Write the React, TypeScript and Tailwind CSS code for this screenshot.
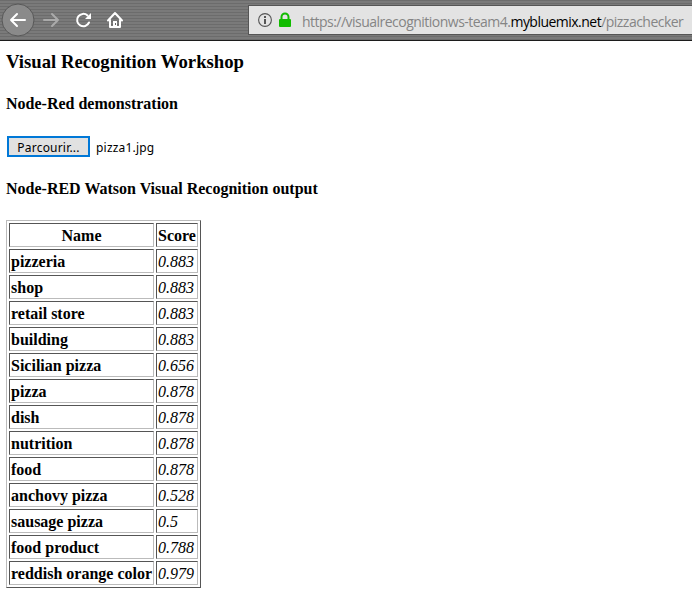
import React from "react";

const rows: [string, string][] = [
  ["pizzeria", "0.883"],
  ["shop", "0.883"],
  ["retail store", "0.883"],
  ["building", "0.883"],
  ["Sicilian pizza", "0.656"],
  ["pizza", "0.878"],
  ["dish", "0.878"],
  ["nutrition", "0.878"],
  ["food", "0.878"],
  ["anchovy pizza", "0.528"],
  ["sausage pizza", "0.5"],
  ["food product", "0.788"],
  ["reddish orange color", "0.979"],
];

const cell =
  "h-6 border border-t-[#555] border-l-[#555] border-r-[#bbb] border-b-[#bbb] px-px pt-[2px] pb-0 leading-[20px] whitespace-nowrap";

function Toolbar() {
  return (
    <header className="flex h-[41px] items-start border-b border-[#1c1c1c] bg-[repeating-linear-gradient(to_bottom,#6c6c6c_0px,#6c6c6c_1px,#7a7a7a_1px,#7a7a7a_3px)]">
      <svg width="248" height="40" viewBox="0 0 248 40" fill="none" className="shrink-0">
        <circle cx="18" cy="20" r="16" fill="#8a8a8a" stroke="#585858" />
        <g stroke="#fff" strokeWidth="2" strokeLinecap="round" strokeLinejoin="round">
          <path d="M25 20H11M17 14l-6 6 6 6" />
          <path stroke="#aaa" d="M44 20h14M52 14l6 6-6 6" />
          <path d="M89 22.5a6.2 6.2 0 1 1-1.5-7" />
          <path d="M108 20.5l7-7.5 7 7.5M110 20v7h10v-7" />
        </g>
        <path d="M91 13v6h-6z" fill="#fff" />
        <path d="M113 21h4v6h-4z" fill="#fff" />
        <path d="M115 23h1v2h-1z" fill="#666" />
      </svg>
      <div className="mt-[5px] flex h-[30px] flex-1 items-center border border-r-0 border-[#555] bg-[#e3e3e3] pl-[9px] font-['Open_Sans','Noto_Sans',sans-serif] text-[14px] tracking-[-0.52px] text-[#858585]">
        <svg width="44" height="28" viewBox="0 0 44 28" fill="none" className="shrink-0">
          <circle cx="7" cy="14" r="6.4" stroke="#555" strokeWidth="1.1" />
          <path d="M6 10h2v2H6zM6 13h2v5H6z" fill="#555" />
          <path d="M23.5 14v-3a3.5 3.5 0 0 1 7 0v3" stroke="#12bc00" strokeWidth="2" />
          <rect x="21" y="13" width="12" height="8" rx="1" fill="#12bc00" />
        </svg>
        <span className="pt-[2px] whitespace-nowrap">
          https://visualrecognitionws-team4.<span className="text-black">mybluemix.net</span>/pizzachecker
        </span>
      </div>
    </header>
  );
}

export default function App() {
  return (
    <div className="h-[603px] w-[692px] overflow-hidden bg-white font-['Liberation_Serif',serif] text-black">
      <Toolbar />
      <main className="pl-[6px]">
        <h1 className="mt-[9px] h-[24px] text-[18.72px] leading-[24px] font-bold">Visual Recognition Workshop</h1>
        <h2 className="mt-[20px] h-5 text-[16px] leading-5 font-bold">Node-Red demonstration</h2>
        <div className="mt-[22px] ml-px flex h-[21px] items-center font-['Noto_Sans',sans-serif] text-[12px] tracking-[0.2px]">
          <button className="flex h-[21px] w-[83px] items-center justify-center border-2 border-[#0078d7] bg-[#e1e1e1] pt-[2px]">Parcourir...</button>
          <span className="ml-[6px] pt-[2px]">pizza1.jpg</span>
        </div>
        <h2 className="mt-[22px] h-5 text-[16px] leading-5 font-bold">Node-RED Watson Visual Recognition output</h2>
        <table className="mt-[21px] w-[195px] table-fixed border-separate border-spacing-[2px] border border-t-[#bbb] border-l-[#bbb] border-r-[#555] border-b-[#555] text-[16px]">
          <colgroup>
            <col className="w-[145px]" />
            <col className="w-[42px]" />
          </colgroup>
          <thead>
            <tr>
              <th className={cell}>Name</th>
              <th className={cell}>Score</th>
            </tr>
          </thead>
          <tbody>
            {rows.map(([name, score]) => (
              <tr key={name}>
                <td className={`${cell} font-bold`}>{name}</td>
                <td className={`${cell} italic`}>{score}</td>
              </tr>
            ))}
          </tbody>
        </table>
      </main>
    </div>
  );
}
